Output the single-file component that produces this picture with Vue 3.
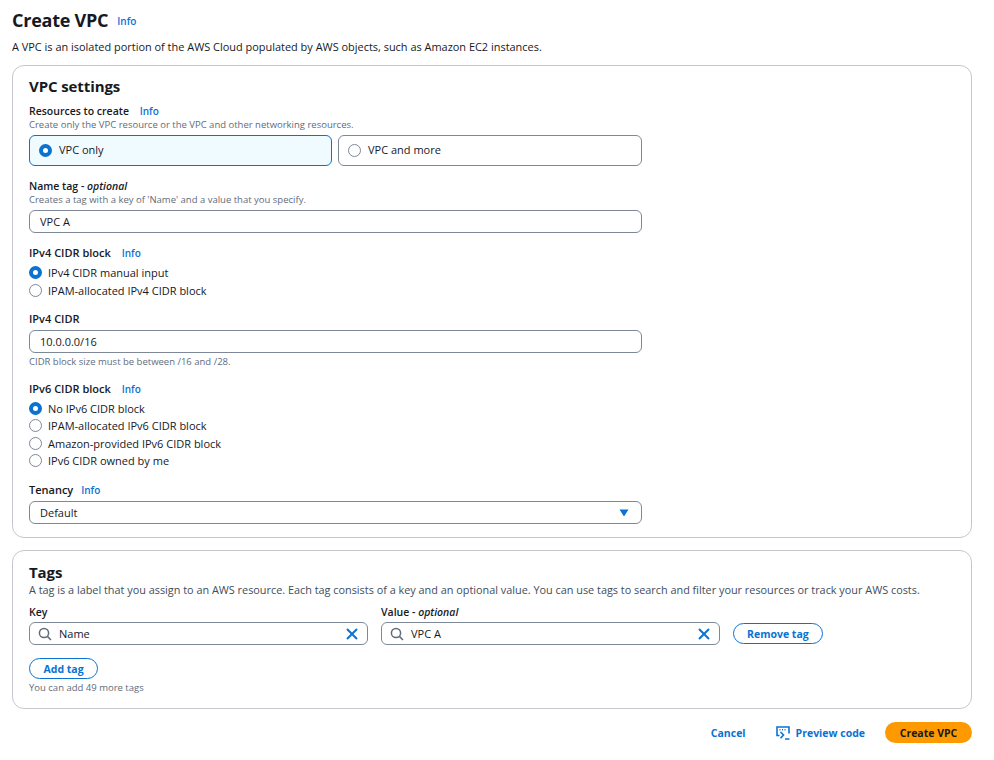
<script setup>
const ipv6 = ['No IPv6 CIDR block', 'IPAM-allocated IPv6 CIDR block', 'Amazon-provided IPv6 CIDR block', 'IPv6 CIDR owned by me']
const ipv4 = ['IPv4 CIDR manual input', 'IPAM-allocated IPv4 CIDR block']
</script>

<template>
  <div class="page">
    <div class="head">
      <h1>Create VPC</h1>
      <a class="info">Info</a>
    </div>
    <p class="intro">A VPC is an isolated portion of the AWS Cloud populated by AWS objects, such as Amazon EC2 instances.</p>

    <section class="card settings">
      <h2>VPC settings</h2>
      <div class="field f-res">
        <div class="label">Resources to create <a class="info">Info</a></div>
        <div class="desc">Create only the VPC resource or the VPC and other networking resources.</div>
        <div class="tiles">
          <div class="tile on"><span class="radio on"></span><span class="up">VPC only</span></div>
          <div class="tile"><span class="radio"></span><span class="up">VPC and more</span></div>
        </div>
      </div>
      <div class="field f-name">
        <div class="label">Name tag - <em>optional</em></div>
        <div class="desc">Creates a tag with a key of 'Name' and a value that you specify.</div>
        <div class="input">VPC A</div>
      </div>
      <div class="field f-v4">
        <div class="label">IPv4 CIDR block <a class="info">Info</a></div>
        <div class="radios">
          <div v-for="(r, i) in ipv4" :key="r" class="opt"><span class="radio" :class="{ on: i === 0 }"></span>{{ r }}</div>
        </div>
      </div>
      <div class="field f-cidr">
        <div class="label">IPv4 CIDR</div>
        <div class="input">10.0.0.0/16</div>
        <div class="desc below">CIDR block size must be between /16 and /28.</div>
      </div>
      <div class="field f-v6">
        <div class="label">IPv6 CIDR block <a class="info">Info</a></div>
        <div class="radios">
          <div v-for="(r, i) in ipv6" :key="r" class="opt"><span class="radio" :class="{ on: i === 0 }"></span>{{ r }}</div>
        </div>
      </div>
      <div class="field f-ten">
        <div class="label">Tenancy <a class="info">Info</a></div>
        <div class="input select">Default
          <svg width="10" height="8" viewBox="0 0 10 8"><path d="M0.5 0.5h9L5 7.5z" fill="#0972d3"/></svg>
        </div>
      </div>
    </section>

    <section class="card tags">
      <h2>Tags</h2>
      <p class="tag-desc">A tag is a label that you assign to an AWS resource. Each tag consists of a key and an optional value. You can use tags to search and filter your resources or track your AWS costs.</p>
      <div class="tag-row">
        <div class="tag-col">
          <div class="label">Key</div>
          <div class="input search">
            <svg class="mag" width="14" height="14" viewBox="0 0 14 14" fill="none" stroke="#5f6b7a" stroke-width="1.5"><circle cx="6" cy="6" r="4.6"/><path d="M9.4 9.4L13 13"/></svg>
            <span>Name</span>
            <svg class="x" width="12" height="12" viewBox="0 0 12 12" fill="none" stroke="#0972d3" stroke-width="2"><path d="M1 1l10 10M11 1L1 11"/></svg>
          </div>
        </div>
        <div class="tag-col">
          <div class="label">Value - <em>optional</em></div>
          <div class="input search">
            <svg class="mag" width="14" height="14" viewBox="0 0 14 14" fill="none" stroke="#5f6b7a" stroke-width="1.5"><circle cx="6" cy="6" r="4.6"/><path d="M9.4 9.4L13 13"/></svg>
            <span>VPC A</span>
            <svg class="x" width="12" height="12" viewBox="0 0 12 12" fill="none" stroke="#0972d3" stroke-width="2"><path d="M1 1l10 10M11 1L1 11"/></svg>
          </div>
        </div>
        <button class="btn remove">Remove tag</button>
      </div>
      <button class="btn add">Add tag</button>
      <div class="desc limit">You can add 49 more tags</div>
    </section>

    <div class="actions">
      <a class="link cancel">Cancel</a>
      <a class="link preview">
        <svg width="14" height="14" viewBox="0 0 14 14" fill="none" stroke="#0972d3" stroke-width="1.6"><path d="M3.5 9.5H1V1h12v6.5"/><path d="M3.5 3.7h1M6 3.7h1M8.5 3.7h1" stroke-width="1.4"/><path d="M4.5 6l3 3-3 3.2M9 13h4.5"/></svg>
        Preview code
      </a>
      <button class="primary">Create VPC</button>
    </div>
  </div>
</template>

<style>
html, body { margin: 0; background: #fff; }
</style>

<style scoped>
.page {
  width: 994px;
  height: 760px;
  box-sizing: border-box;
  padding: 8px 22px 0 12px;
  overflow: hidden;
  font-family: "Open Sans", "Noto Sans", sans-serif;
  color: #16191f;
  font-size: 11px;
}
.head { display: flex; align-items: center; gap: 9px; height: 24px; }
h1 { margin: 0; font-size: 18px; line-height: 24px; font-weight: 700; letter-spacing: -0.25px; }
.info { color: #0972d3; font-size: 10px; font-weight: 600; }
.head .info { margin-top: 2px; }
.intro { margin: 7px 0 0; font-size: 10.95px; line-height: 16px; }
.card {
  border: 1px solid #c6c6cd;
  border-radius: 12px;
  box-sizing: border-box;
  padding: 0 16px;
  background: #fff;
}
.settings { margin-top: 10px; height: 473px; padding-top: 10px; }
h2 { margin: 0; font-size: 15px; line-height: 20px; font-weight: 700; letter-spacing: -0.1px; }
.label { font-size: 10.5px; line-height: 14px; font-weight: 600; }
.f-v4 .label, .f-cidr .label, .f-v6 .label, .f-ten .label { font-size: 11px; }
.label em { font-weight: 600; font-style: italic; }
.label .info { margin-left: 8px; }
.f-ten .label .info { margin-left: 5px; }
.desc { font-size: 9.5px; line-height: 12px; color: #5f6b7a; }
.below { margin-top: 3px; }
.f-res { margin-top: 8px; }
.f-res .desc { margin-top: 1px; }
.tiles { display: grid; grid-template-columns: 303px 304px; gap: 6px; margin-top: 4px; }
.tile {
  height: 31px;
  box-sizing: border-box;
  border: 1px solid #7d8998;
  border-radius: 6px;
  display: flex;
  align-items: center;
  padding-left: 9px;
  gap: 7px;
  font-size: 11px;
}
.tile .up { position: relative; top: -1px; }
.tile.on { background: #f0fbff; border-color: #0972d3; }
.radio {
  width: 13px;
  height: 13px;
  box-sizing: border-box;
  border-radius: 50%;
  border: 1px solid #7d8998;
  background: #fff;
  flex: none;
}
.radio.on { border: 4px solid #0972d3; }
.f-name { margin-top: 13px; }
.f-name .desc { margin-top: 1px; }
.input {
  width: 613px;
  height: 23px;
  box-sizing: border-box;
  border: 1px solid #7d8998;
  border-radius: 6px;
  display: flex;
  align-items: center;
  padding-left: 10px;
  font-size: 11px;
  background: #fff;
}
.f-name .input { margin-top: 4px; }
.f-v4 { margin-top: 13px; }
.radios { margin-top: 4px; }
.opt { display: flex; align-items: center; gap: 6px; height: 17.4px; font-size: 11px; }
.f-cidr { margin-top: 13px; }
.f-cidr .input { margin-top: 4px; }
.f-v6 { margin-top: 14px; }
.f-ten { margin-top: 14px; }
.f-ten .input { margin-top: 4px; }
.select { justify-content: space-between; padding-right: 12px; }
.tags { margin-top: 12px; height: 159px; padding-top: 11px; }
.tag-desc { margin: 0; font-size: 10.87px; line-height: 16px; color: #414d5c; }
.tag-row { display: flex; align-items: flex-end; gap: 13px; margin-top: 7px; }
.tag-col .input { margin-top: 3px; width: 339px; }
.search { padding-left: 8px; padding-right: 9px; gap: 7px; }
.search span { flex: 1; }
.btn {
  font-family: inherit;
  height: 21px;
  box-sizing: border-box;
  border: 1px solid #0972d3;
  border-radius: 11px;
  background: #fff;
  color: #0972d3;
  font-weight: 700;
  font-size: 10.5px;
  padding: 0 13.5px;
}
.remove { margin-bottom: 1px; padding: 0 13px; }
.add { margin-top: 13px; display: block; }
.limit { margin-top: 3px; }
.actions { display: flex; align-items: center; justify-content: flex-end; margin-top: 13px; height: 21px; }
.link { color: #0972d3; font-weight: 700; font-size: 10.5px; display: flex; align-items: center; }
.cancel { margin-right: 30px; }
.preview { gap: 6px; margin-right: 20px; }
.primary {
  font-family: inherit;
  height: 21px;
  width: 87px;
  border: none;
  border-radius: 11px;
  background: #ff9900;
  color: #16191f;
  font-weight: 700;
  font-size: 10.5px;
  padding: 0;
}
</style>
